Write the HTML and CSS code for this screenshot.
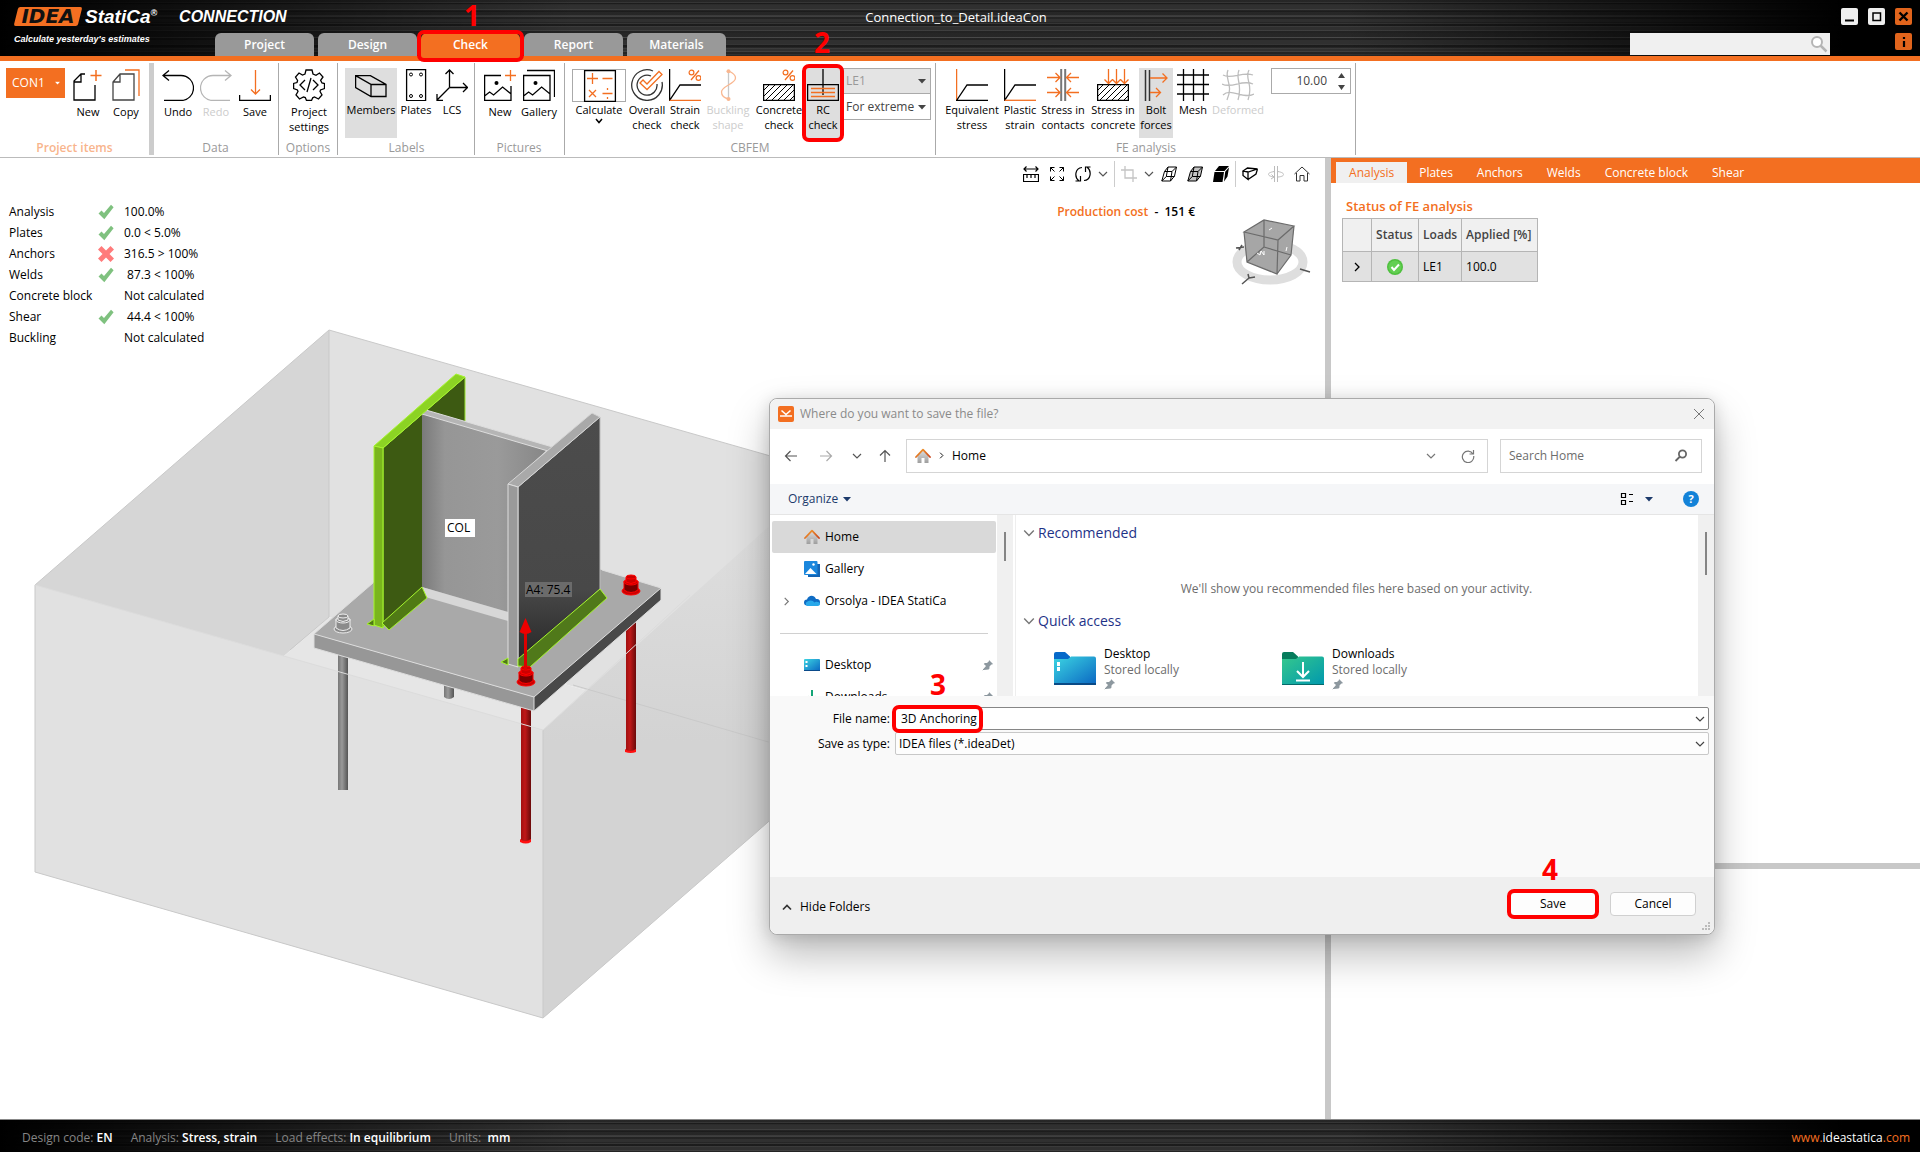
FILE: index.html
```html
<!DOCTYPE html>
<html lang="en">
<head>
<meta charset="utf-8">
<title>Connection_to_Detail.ideaCon</title>
<link rel="stylesheet" href="styles.css">
</head>
<body>
<svg class="defs" aria-hidden="true">
  <defs>
    <linearGradient id="roof" x1="0" y1="0" x2="1" y2="1"><stop offset="0" stop-color="#f7a531"/><stop offset="1" stop-color="#c9421a"/></linearGradient>
    <linearGradient id="wall" x1="0" y1="0" x2="0" y2="1"><stop offset="0" stop-color="#dcdcdc"/><stop offset="1" stop-color="#9e9e9e"/></linearGradient>
    <linearGradient id="blue" x1="0" y1="0" x2="1" y2="1"><stop offset="0" stop-color="#3cd5e2"/><stop offset="1" stop-color="#0a66c2"/></linearGradient>
    <linearGradient id="green" x1="0" y1="0" x2="1" y2="1"><stop offset="0" stop-color="#35c88d"/><stop offset="1" stop-color="#0098ae"/></linearGradient>
  </defs>
  <symbol id="i-home" viewBox="0 0 16 16"><path d="M2.500 7.500v7.500h4v-5h3v5h4V7.500L8 2.500z" fill="url(#wall)"/><path d="M1 9 8 1.600 15 9" fill="none" stroke="url(#roof)" stroke-width="1.800" stroke-linecap="round" stroke-linejoin="round"/></symbol>
  <symbol id="i-pin" viewBox="0 0 12 12"><path d="M7 1l4 4-1 .6-.6-.1-1.900 1.900-.1 2.300-.9.9L1.500 10.900 1 10.400 4 7 1.800 5l1-.9 2.200-.1L6.900 2.200z" fill="#8d989f"/><path d="M4 8 .8 11.200" stroke="#8d989f"/></symbol>
  <symbol id="i-down" viewBox="0 0 10 10"><path d="M1 3l4 4 4-4" fill="none" stroke="currentColor" stroke-width="1.200"/></symbol>
  <symbol id="i-right" viewBox="0 0 10 10"><path d="M3 1l4 4-4 4" fill="none" stroke="currentColor" stroke-width="1.300"/></symbol>
  <symbol id="i-caret" viewBox="0 0 8 6"><path d="M0 1h8L4 5.500z" fill="currentColor"/></symbol>
  <symbol id="i-tick" viewBox="0 0 16 16"><path d="M.5 9.500 3.500 6.500 6 9 13 .8l2.600 2.400L6.300 15.200z" fill="#7fc17f"/></symbol>
  <symbol id="i-cross" viewBox="0 0 16 16"><path d="M3.500 0 8 4.500 12.500 0 16 3.500 11.500 8l4.500 4.500-3.500 3.500L8 11.500 3.500 16 0 12.500 4.500 8 0 3.500z" fill="#ff7b7b"/></symbol>
  <symbol id="i-cube" viewBox="0 0 16 16"><path d="M3.500 5.500 7 1h8.500l-2 9-4 5H.8z"/><path d="M3.500 5.500H11l4.500-4.500M11 5.500 9.500 15M7 1 5.300 10.500H13.500M5.300 10.500.8 15" fill="none"/></symbol>
</svg>

<header class="top">
  <div class="top-row">
    <div class="brand">
      <span class="logo"><span class="logo-idea">IDEA</span></span><span class="logo-name">StatiCa<sup>®</sup></span><span class="logo-app">CONNECTION</span>
    </div>
    <h1 class="doc-title">Connection_to_Detail.ideaCon</h1>
    <div class="win-buttons">
      <button class="win" aria-label="Minimize"><svg width="17" height="17"><path d="M4 12.500h9" stroke="#000" stroke-width="2"/></svg></button>
      <button class="win" aria-label="Maximize"><svg width="17" height="17"><path d="M5 5h7.500v7.500H5z" fill="none" stroke="#000" stroke-width="1.500"/></svg></button>
      <button class="win hot" aria-label="Close"><svg width="17" height="17"><path d="M4.500 4.500l8 8M12.500 4.500l-8 8" stroke="#000" stroke-width="2.400"/></svg></button>
    </div>
  </div>
  <div class="tab-row">
    <div class="tagline">Calculate yesterday's estimates</div>
    <nav class="tabs">
      <a class="tab" href="#project">Project</a>
      <a class="tab" href="#design">Design</a>
      <a class="tab active marked" href="#check">Check<span class="ring ring-tab"></span><span class="num num-tab">1</span></a>
      <a class="tab" href="#report">Report</a>
      <a class="tab" href="#materials">Materials</a>
    </nav>
    <div class="find">
      <input type="text" aria-label="Search">
      <svg width="18" height="18" viewBox="0 0 18 18"><circle cx="7" cy="7" r="5" fill="#fff" stroke="#b5b5b5" stroke-width="2"/><path d="M10.500 10.500l6 6" stroke="#b5b5b5" stroke-width="2.500"/></svg>
    </div>
    <button class="win hot" aria-label="Information"><svg width="17" height="17"><path d="M9 4v2M9 8v6" stroke="#000" stroke-width="2.200"/></svg></button>
  </div>
</header>

<section class="ribbon">
  <div class="group g-items">
    <div class="tools">
      <button class="con">CON1 <svg width="5" height="4" viewBox="0 0 8 6"><use href="#i-caret"/></svg></button>
      <button class="tool low w46"><svg width="32" height="32"><path d="M23 16v15H2V12l7-7h4M9 5v8H2" fill="none" stroke="#000" stroke-width="1.300"/><path d="M24 1v11M18.500 6.500h11" stroke="#f36f21" stroke-width="1.500"/></svg>New</button>
      <button class="tool low w30"><svg width="32" height="32"><path d="M3 31V13l7-8h14v26zM10 5v8H3" fill="none" stroke="#444" stroke-width="1.300"/><path d="M15 1h14v26" fill="none" stroke="#f36f21" stroke-width="1.300"/></svg>Copy</button>
    </div>
    <div class="group-name hot-name">Project items</div>
  </div>
  <div class="group g-data">
    <div class="tools">
      <button class="tool low w38"><svg width="32" height="32"><path d="M1 6.500h18a12 12 0 0 1 0 25H2M7 1.500l-6 5 6 5" fill="none" stroke="#000" stroke-width="1.300"/></svg>Undo</button>
      <button class="tool low w38 off"><svg width="32" height="32"><path d="M31 6.500H13a12 12 0 0 0 0 25h17M25 1.500l6 5-6 5" fill="none" stroke="#b5b5b5" stroke-width="1.300"/></svg>Redo</button>
      <button class="tool low w40"><svg width="32" height="32"><path d="M.6 26v5.400h30.800V26" fill="none" stroke="#000" stroke-width="1.300"/><path d="M16.500 1v24M12 20.500l4.500 4.500 4.500-4.500" fill="none" stroke="#f36f21" stroke-width="1.300"/></svg>Save</button>
    </div>
    <div class="group-name">Data</div>
  </div>
  <div class="group g-options">
    <div class="tools">
      <button class="tool low w60"><svg width="32" height="32" viewBox="0 0 32 32"><path d="M13 1h6l1 4 3 1.300L26.500 4 30 8l-2.400 3.300L29 14l2.500.6v5L27.500 21 27 22.500 29 26l-3.500 4-4-2-1.800.8L18.500 31.500h-5L12.300 28.500 10.500 28l-4 2L3 26l2-3.500-.6-1.500L.6 19.500v-5L4 13.500l.6-2L2.500 8 6 4l3.500 2L12 5z" fill="none" stroke="#000" stroke-width="1.300"/><path d="M12 11l-5 5 5 5M20 11l5 5-5 5M18 9l-4 14" fill="none" stroke="#000" stroke-width="1.300"/></svg>Project<br>settings</button>
    </div>
    <div class="group-name">Options</div>
  </div>
  <div class="group g-labels">
    <div class="tools">
      <button class="tool w52 on"><svg width="32" height="32"><path d="M.6 6.600h14.800L31 15.500v12H16L.6 18.500zM.6 6.600 16 15.500v12M16 15.500h15" fill="none" stroke="#000" stroke-width="1.300"/></svg>Members</button>
      <button class="tool w38"><svg width="32" height="32"><path d="M6.600.6h19v31h-19z" fill="none" stroke="#000" stroke-width="1.300"/><g fill="#fff" stroke="#000"><circle cx="11" cy="5.500" r="1.500"/><circle cx="21" cy="5.500" r="1.500"/><circle cx="11" cy="27" r="1.500"/><circle cx="21" cy="27" r="1.500"/></g></svg>Plates</button>
      <button class="tool w34"><svg width="32" height="32"><path d="M13.500 18V1M9.500 5l4-4 4 4M13.500 18.500h18M27 14l4.500 4.500L27 23M13.500 18.500.8 31.200M1 25v6.500h6" fill="none" stroke="#000" stroke-width="1.300"/></svg>LCS</button>
    </div>
    <div class="group-name">Labels</div>
  </div>
  <div class="group g-pictures">
    <div class="tools">
      <button class="tool low w40"><svg width="32" height="32"><path d="M17 6.500H.6v25H27V17M.6 27l5-4 4 3 9-8 8.500 7" fill="none" stroke="#000" stroke-width="1.300"/><circle cx="12.500" cy="14" r="2"/><path d="M26.500 1v11M21 6.500h11" stroke="#f36f21" stroke-width="1.300"/></svg>New</button>
      <button class="tool low w38"><svg width="32" height="32"><path d="M.6 6.500H27v25H.6zM.6 27l5-4 4 3 9-8 8.500 7M4 1.500h27.500V28" fill="none" stroke="#000" stroke-width="1.300"/><circle cx="12.500" cy="14" r="2"/></svg>Gallery</button>
    </div>
    <div class="group-name">Pictures</div>
  </div>
  <div class="group g-cbfem">
    <div class="tools">
      <button class="tool calc w56"><svg width="32" height="32"><path d="M.6.6h30.800v30.800H.6z" fill="none" stroke="#000" stroke-width="1.300"/><path d="M3 8.500h11M8.500 3v11M18.500 8.500h10M5 20l7 7M12 20l-7 7M18.500 23.500h10M23.500 18v2M23.500 27v2" stroke="#f36f21" stroke-width="1.300"/></svg>Calculate<svg class="more" width="8" height="8"><path d="M1 2l3 3.500L7 2" fill="none" stroke="#000" stroke-width="1.500"/></svg></button>
      <button class="tool w40"><svg width="32" height="32"><path d="M22 2a15.300 15.300 0 1 0 9 11M20 7a10 10 0 1 0 6 8" fill="none" stroke="#333" stroke-width="1.300"/><path d="M9 14l3-3 4 4L28 2.500l3 3L16 20.500z" fill="#fff" stroke="#f36f21" stroke-width="1.300"/></svg>Overall<br>check</button>
      <button class="tool w36"><svg width="32" height="32"><path d="M.6 0v31.400L11 16h21" fill="none" stroke="#000" stroke-width="1.300"/><path d="M.6 31.300H32M30 1.500 22 11" stroke="#f36f21" stroke-width="1.300"/><g fill="none" stroke="#f36f21" stroke-width="1.200"><circle cx="22.500" cy="3.500" r="2.400"/><circle cx="29.500" cy="9" r="2.400"/></g></svg>Strain<br>check</button>
      <button class="tool w50 off"><svg width="32" height="32"><path d="M16.500 2v28" stroke="#c8c8c8" stroke-width="1.300"/><path d="M16.500 2c5 2 7 5 7 7 0 6-14 8-14 14 0 4 3 6 7 7" fill="none" stroke="#f9b790" stroke-width="1.300"/><circle cx="16.500" cy="2.200" r="2" fill="#f9b790"/><circle cx="16.500" cy="30" r="2" fill="#f9b790"/></svg>Buckling<br>shape</button>
      <button class="tool w52"><svg width="32" height="32"><path d="M.6 15.600h30.800v15.800H.6z" fill="none" stroke="#000" stroke-width="1.300"/><path d="M1 21l5-5M1 27l11-11M3 31l15-15M9 31l15-15M15 31l15-15M21 31l10-10M27 31l4-4" stroke="#000"/><path d="M30 1.500 22 11" stroke="#f36f21" stroke-width="1.300"/><g fill="none" stroke="#f36f21" stroke-width="1.200"><circle cx="22.500" cy="3.500" r="2.400"/><circle cx="29.500" cy="9" r="2.400"/></g></svg>Concrete<br>check</button>
      <button class="tool w36 on marked"><svg width="32" height="32"><path d="M.6 15.600h30.800v15.800H.6zM16 0v26" fill="none" stroke="#000" stroke-width="1.300"/><path d="M4 19.500h24M4 23.500h24M4 27.500h24" stroke="#f36f21" stroke-width="1.300"/></svg>RC<br>check<span class="ring ring-rc"></span><span class="num num-rc">2</span></button>
      <div class="combos">
        <span class="combo"><select aria-label="Load effect" disabled><option>LE1</option></select><svg width="8" height="6"><use href="#i-caret"/></svg></span>
        <span class="combo"><select aria-label="Result filter"><option>For extreme</option></select><svg width="8" height="6"><use href="#i-caret"/></svg></span>
      </div>
    </div>
    <div class="group-name">CBFEM</div>
  </div>
  <div class="group g-fe">
    <div class="tools">
      <button class="tool w58"><svg width="32" height="32"><path d="M.6 0v31" stroke="#f36f21" stroke-width="1.300"/><path d="M32 31.400H.6L11 16h21" fill="none" stroke="#000" stroke-width="1.300"/></svg>Equivalent<br>stress</button>
      <button class="tool w38"><svg width="32" height="32"><path d="M.6 0v31.400L11 16h21" fill="none" stroke="#000" stroke-width="1.300"/><path d="M.6 31.300H32" stroke="#f36f21" stroke-width="1.300"/></svg>Plastic<br>strain</button>
      <button class="tool w48"><svg width="32" height="32"><path d="M14.200 0v32M18.200 0v32" stroke="#777" stroke-width="2"/><path d="M0 8.500h13M8.500 4l4.500 4.500L8.500 13M0 23.500h13M8.500 19l4.500 4.500L8.500 28M32 8.500H19.500M24 4l-4.500 4.500L24 13M32 23.500H19.500M24 19l-4.500 4.500L24 28" fill="none" stroke="#f36f21" stroke-width="1.300"/></svg>Stress in<br>contacts</button>
      <button class="tool w52"><svg width="32" height="32"><path d="M.6 15.600h30.800v15.800H.6z" fill="none" stroke="#000" stroke-width="1.300"/><path d="M1 21l5-5M1 27l11-11M3 31l15-15M9 31l15-15M15 31l15-15M21 31l10-10M27 31l4-4" stroke="#000"/><path d="M11.500 0v14M7.500 10.500l4 4 4-4M19.500 0v14M15.500 10.500l4 4 4-4M27.500 0v14M23.500 10.500l4 4 4-4" fill="none" stroke="#f36f21" stroke-width="1.300"/></svg>Stress in<br>concrete</button>
      <button class="tool w34 on"><svg width="32" height="32"><path d="M5.500 1v31M9.500 1v31" stroke="#333" stroke-width="1.500"/><path d="M10 9h17M22.500 4.500 27 9l-4.500 4.500M10 23.500h10M16 19l4.500 4.500L16 28" fill="none" stroke="#f36f21" stroke-width="1.300"/></svg>Bolt<br>forces</button>
      <button class="tool w40"><svg width="32" height="32"><path d="M6.500 0v32M16.500 0v32M26.500 0v32M0 6h32M0 15.500h32M0 25h32" stroke="#000" stroke-width="1.300"/></svg>Mesh</button>
      <button class="tool w50 off"><svg width="32" height="32"><path d="M6 1c-4 9 6 14-1 30M17 1c-4 9 4 14-1 30M27 1c-5 9 5 14-1 30M1 6c8 5 20-4 30 0M0 15c10 5 20-5 31 0M1 26c8-8 20 5 31-1" fill="none" stroke="#bdbdbd" stroke-width="1.300"/></svg>Deformed</button>
      <span class="spin"><input type="text" value="10.00" aria-label="Deformation scale"><svg width="7" height="17"><path d="M0 5h7L3.500 0zM0 12h7l-3.500 5z" fill="#444"/></svg></span>
    </div>
    <div class="group-name">FE analysis</div>
  </div>
</section>

<main class="work">
  <section class="view">
    <svg class="scene" viewBox="0 158 1325 961" preserveAspectRatio="xMinYMin slice" aria-label="Connection model">
      <defs>
        <linearGradient id="webg"><stop offset="0" stop-color="#7a7a7a"/><stop offset=".18" stop-color="#969696"/><stop offset=".6" stop-color="#9a9a9a"/><stop offset="1" stop-color="#868686"/></linearGradient>
        <linearGradient id="side" x1="0" y1="0" x2="0" y2="1"><stop offset="0" stop-color="#e1e1e1"/><stop offset=".5" stop-color="#d3d3d3"/></linearGradient>
        <linearGradient id="rodg"><stop offset="0" stop-color="#777"/><stop offset=".4" stop-color="#999"/><stop offset="1" stop-color="#555"/></linearGradient>
        <linearGradient id="rodr"><stop offset="0" stop-color="#a01010"/><stop offset=".4" stop-color="#c01818"/><stop offset="1" stop-color="#6a0a0a"/></linearGradient>
        <linearGradient id="dk" x1="0" y1="0" x2="0" y2="1"><stop offset="0" stop-color="#4c4c4c"/><stop offset=".7" stop-color="#484848"/><stop offset="1" stop-color="#262626"/></linearGradient>
      </defs>
      <path d="M329 330 837 475v287L329 617z" fill="#e1e1e1"/>
      <path d="M35 585 329 330v287L35 872z" fill="#d6d6d6"/>
      <path d="M329 617 837 762 543 1018 35 872z" fill="#e6e6e6"/>
      <path d="M35 585 543 730v288L35 872z" fill="#e1e1e1"/>
      <path d="M543 730 837 465v297L543 1018z" fill="url(#side)"/>
      <g fill="none" stroke="#c9c9c9"><path d="M35 585 329 330 837 475M329 330v287l-39 33M573 685l264 77M35 585v287l508 146V730M543 1018l294-256"/></g>
      <path d="M338 650h10v140h-10z" fill="url(#rodg)"/><path d="M444 680h10v17q-5 4-10 0z" fill="url(#rodg)"/>
      <path d="M626 620h10v131h-10z" fill="url(#rodr)"/><path d="M521 700h10v142h-10z" fill="url(#rodr)"/>
      <path d="M625 749q5 4 11 0v3q-5 2-11 0zM520 839q5 4 11 0v3q-5 3-11 0z" fill="#ff1010"/>
      <path d="M314 634 444 522 661 588 534 697z" fill="#a9a9a9"/>
      <path d="M314 634 534 697v14L314 648z" fill="#979797"/>
      <path d="M534 697 661 588v12L534 711z" fill="#494949"/>
      <path d="M314 634v14L534 711 661 600v-12L534 697z M534 697v14M314 634 373 583M602 570l59 18" fill="none" stroke="#dcdcdc"/>
      <path d="M35 585 543 730 690 595" fill="none" stroke="#dcdcdc"/>
      <path d="M383 448 465 377v170l-43 40-39 40z" fill="#3d5a12" stroke="#9be62e"/>
      <path d="M422 412 548 449 508 486v126l-86-25z" fill="url(#webg)"/>
      <path d="M466 423v-3l10 4 74 22-4 4-80-24z" fill="#e1e1e1"/>
      <path d="M418 412q3-4 8-2l130 38-8 3-126-37z" fill="#b5b5b5" stroke="#ddd"/>
      <path d="M422 587 508 612v9l-86-25z" fill="#d7d7d7"/>
      <path d="M374 446 456 374l9 3-82 71z" fill="#8cd324" stroke="#a6f52e"/>
      <path d="M374 446l9 2v180l-9-3z" fill="#7ab51d" stroke="#a6f52e"/>
      <path d="M422 587l5 11-38 32-7-7zM367 624l7-5v7z" fill="#507a15" stroke="#a6f52e"/>
      <path d="M518 487 600 417v172l-82 74z" fill="url(#dk)" stroke="#bbb"/>
      <path d="M508 484 592 413l8 4-82 70z" fill="#a9a9a9" stroke="#d5d5d5"/>
      <path d="M508 484l10 3v180l-10-3z" fill="#9a9a9a" stroke="#ddd"/>
      <path d="M600 589l7 9-77 69-12-1v-7zM501 662l7-4v7z" fill="#50791a" stroke="#a6f52e"/>
      <g fill="#8b8b8b" stroke="#eee"><ellipse cx="343" cy="629" rx="9" ry="4"/><path d="M336 619h14v9q-7 5-14 0z"/><ellipse cx="343" cy="620" rx="7" ry="3"/><path d="M338 616v4q5 3 10 0v-4z"/><ellipse cx="343" cy="616" rx="5" ry="2"/></g>
      <g fill="#c00" stroke="#f00"><ellipse cx="631" cy="591" rx="9" ry="4"/><path d="M624 581h14v9q-7 5-14 0z" fill="#700"/><ellipse cx="631" cy="582" rx="7" ry="3"/><path d="M626 577v5q5 3 10 0v-5z"/><ellipse cx="631" cy="577" rx="5" ry="2"/>
      <ellipse cx="526" cy="682" rx="9" ry="4"/><path d="M519 672h14v9q-7 5-14 0z" fill="#700"/><ellipse cx="526" cy="673" rx="7" ry="3"/><path d="M521 668v5q5 3 10 0v-5z"/><ellipse cx="526" cy="668" rx="5" ry="2"/></g>
      <path d="M525.500 632v38" stroke="#d00" stroke-width="3"/><path d="M525.500 618l-6 14q6 4 12 0z" fill="#e00"/>
      <path d="M445 519h30v18h-30z" fill="#fff"/><text class="tag" x="447" y="532">COL</text>
      <path d="M525 582h47v15h-47z" fill="#6b6b6b"/><text class="tag" x="526" y="594">A4: 75.4</text>
    </svg>
    <div class="view-tools">
      <button aria-label="Measure"><svg width="16" height="16"><path d="M.5 8.500h15v7H.5zM4 9v3M8 9v3M12 9v3M1 3h14M3.500.5 1 3l2.500 2.500M12.500.5 15 3l-2.500 2.500" fill="none" stroke="#000" stroke-width="1.200"/></svg></button>
      <button aria-label="Zoom to fit"><svg width="16" height="16"><path d="M1.500 5.500v-4h4M1.500 1.500l4 4M10.500 1.500h4v4M14.500 1.500l-4 4M1.500 10.500v4h4M1.500 14.500l4-4M14.500 10.500v4h-4M14.500 14.500l-4-4" fill="none" stroke="#000"/></svg></button>
      <button aria-label="Rotate"><svg width="16" height="16"><path d="M4 15C-1 11 0 2 7 1.500M5.500 10v5H.5M12 1c5 4 4 13-3 13.500M10.500 6V1h5" fill="none" stroke="#000" stroke-width="1.200"/></svg></button>
      <button class="mini" aria-label="Rotate options"><svg width="10" height="10"><use href="#i-down"/></svg></button>
      <i class="bar"></i>
      <button aria-label="Section"><svg width="16" height="16"><path d="M4 0v12h12M0 4h12v12" fill="none" stroke="#c4c4c4" stroke-width="1.300"/></svg></button>
      <button class="mini" aria-label="Section options"><svg width="10" height="10"><use href="#i-down"/></svg></button>
      <button aria-label="Wireframe"><svg width="16" height="16" fill="none" stroke="#000"><use href="#i-cube"/></svg></button>
      <button aria-label="Transparent"><svg width="16" height="16" fill="#c4c4c4" stroke="#000"><use href="#i-cube"/></svg></button>
      <button aria-label="Solid"><svg width="16" height="16"><path d="M1.500 6h9.500L9.500 16H0zM2 5 6 0h10l-4.500 5zM11 15.500 12.200 5.800 16 1.500l-1.500 9z"/></svg></button>
      <i class="bar"></i>
      <button aria-label="Perspective"><svg width="16" height="16"><path d="M1 5 5.500 2 15.500 3 6 6zM1 5v4.500l5 4V6M6 13.500 14 8l1.500-5" fill="none" stroke="#000" stroke-width="1.300"/></svg></button>
      <button aria-label="Mirror"><svg width="16" height="16"><path d="M6.500 0v16M9.500 0v16M6 5.500C-2 7-1 10 6 11M3.500 8.500 6 11l-3 2M10 5.500c8 1.500 7 5 0 5.500" fill="none" stroke="#bbb"/></svg></button>
      <button aria-label="Home view"><svg width="16" height="16"><path d="M.5 8 8 1l7.500 7M2.500 7v8h3.500V9.500h4V15h3.500V7" fill="none" stroke="#333"/></svg></button>
    </div>
    <div class="hud">
      <table class="checks">
        <tr><th>Analysis</th><td><svg width="16" height="16"><use href="#i-tick"/></svg></td><td>100.0%</td></tr>
        <tr><th>Plates</th><td><svg width="16" height="16"><use href="#i-tick"/></svg></td><td>0.0 &lt; 5.0%</td></tr>
        <tr><th>Anchors</th><td><svg width="16" height="16"><use href="#i-cross"/></svg></td><td>316.5 &gt; 100%</td></tr>
        <tr><th>Welds</th><td><svg width="16" height="16"><use href="#i-tick"/></svg></td><td>&nbsp;87.3 &lt; 100%</td></tr>
        <tr><th>Concrete block</th><td></td><td>Not calculated</td></tr>
        <tr><th>Shear</th><td><svg width="16" height="16"><use href="#i-tick"/></svg></td><td>&nbsp;44.4 &lt; 100%</td></tr>
        <tr><th>Buckling</th><td></td><td>Not calculated</td></tr>
      </table>
      <p class="cost"><b>Production cost</b>&nbsp; - &nbsp;151 €</p>
      <svg class="nav-cube" width="80" height="68" viewBox="1231 218 80 68" aria-label="View orientation">
        <ellipse cx="1270" cy="262" rx="33" ry="18" fill="none" stroke="#dedede" stroke-width="9"/>
        <path d="M1244 232 1264 220 1294 226 1291 255 1277 274 1247 262z" fill="#a6a6a6"/>
        <path d="M1244 232l34 8 16-14-30-6zl3 30 30 12 1-34M1277 274l14-19 3-29M1264 220v27l-17 15M1264 247l27 8" fill="none" stroke="#6b6b6b" stroke-width="1.200"/>
        <path d="M1269 230l3-2M1286 251l1-4M1257 253l3 2 1-4 3 4v-4" stroke="#fff" fill="none"/>
        <path d="M1236 248l8-1M1239 250l3-5M1300 269l10 3M1242 284l7-6-1-4M1249 278l6-1" stroke="#555" stroke-width="1.500" fill="none"/>
      </svg>
    </div>
  </section>

  <aside class="results">
    <nav class="result-tabs">
      <a class="active" href="#analysis">Analysis</a><a href="#plates">Plates</a><a href="#anchors">Anchors</a><a href="#welds">Welds</a><a href="#block">Concrete block</a><a href="#shear">Shear</a>
    </nav>
    <div class="result-body">
      <h2>Status of FE analysis</h2>
      <table class="grid">
        <thead><tr><th></th><th>Status</th><th>Loads</th><th>Applied [%]</th></tr></thead>
        <tbody><tr><td><svg width="10" height="10"><use href="#i-right"/></svg></td><td><svg width="16" height="16"><circle cx="8" cy="8" r="8" fill="#4fc03f"/><circle cx="8" cy="8" r="6.500" fill="#63cf52"/><path d="M4.500 8l2.500 3 5-5.500" fill="none" stroke="#fff" stroke-width="2"/></svg></td><td>LE1</td><td>100.0</td></tr></tbody>
      </table>
    </div>
    <div class="result-detail"></div>
  </aside>
</main>

<footer class="status">
  <span>Design code: <b>EN</b></span><span>Analysis: <b>Stress, strain</b></span><span>Load effects: <b>In equilibrium</b></span><span>Units: <b>&nbsp;mm</b></span>
  <a href="#site">www.<em>ideastatica</em>.com</a>
</footer>

<div class="dialog" role="dialog" aria-labelledby="dlg-title">
  <div class="dlg-title">
    <svg width="16" height="16"><rect width="16" height="16" rx="2" fill="#f36f21"/><path d="M2 10h12M3.500 4.500 8 8.500l4.500-4" fill="none" stroke="#fff" stroke-width="1.600"/></svg>
    <span id="dlg-title">Where do you want to save the file?</span>
    <button class="plain" aria-label="Close"><svg width="12" height="12"><path d="M1 1l10 10M11 1 1 11" stroke="#777"/></svg></button>
  </div>
  <div class="dlg-nav">
    <button class="plain" aria-label="Back"><svg width="14" height="14"><path d="M13 7H1.500M6.500 2l-5 5 5 5" fill="none" stroke="#555" stroke-width="1.200"/></svg></button>
    <button class="plain" aria-label="Forward"><svg width="14" height="14"><path d="M1 7h11.500M7.500 2l5 5-5 5" fill="none" stroke="#aaa" stroke-width="1.200"/></svg></button>
    <button class="plain" aria-label="Recent"><svg width="10" height="10"><use href="#i-down"/></svg></button>
    <button class="plain" aria-label="Up"><svg width="14" height="14"><path d="M7 13V1.500M2 6.500l5-5 5 5" fill="none" stroke="#555" stroke-width="1.200"/></svg></button>
    <div class="address">
      <svg width="16" height="16"><use href="#i-home"/></svg>
      <svg width="7" height="7" viewBox="0 0 10 10"><use href="#i-right"/></svg>
      <a href="#home">Home</a>
      <button class="plain" aria-label="Locations"><svg width="10" height="10"><use href="#i-down"/></svg></button>
      <button class="plain" aria-label="Refresh"><svg width="14" height="14"><path d="M12 5A5.700 5.700 0 1 0 12.700 7M12.500 1v4h-4" fill="none" stroke="#777" stroke-width="1.200"/></svg></button>
    </div>
    <div class="dlg-search"><input type="text" placeholder="Search Home" aria-label="Search Home"><svg width="14" height="14"><circle cx="8.500" cy="5" r="3.600" fill="none" stroke="#666" stroke-width="1.800"/><path d="M6 7.500 1.500 12" stroke="#666" stroke-width="1.800"/></svg></div>
  </div>
  <div class="dlg-bar">
    <button class="plain organize">Organize <svg width="8" height="6"><use href="#i-caret"/></svg></button>
    <button class="plain" aria-label="View"><svg width="14" height="14"><path d="M1.500 1.500h4v4h-4zM1.500 8.500h4v4h-4zM9 2.500h4M9 9.500h4" fill="none" stroke="#000" stroke-width="1.200"/></svg></button>
    <button class="plain" aria-label="View options"><svg width="8" height="6"><use href="#i-caret"/></svg></button>
    <button class="plain help" aria-label="Help">?</button>
  </div>
  <div class="dlg-body">
    <nav class="places">
      <a class="active" href="#home"><svg width="16" height="16"><use href="#i-home"/></svg>Home</a>
      <a href="#gallery"><svg width="16" height="16"><path d="M4 3h12v13H4z" fill="#1565b5"/><rect width="13.500" height="14" rx="1" fill="#1b87dd"/><path d="M1 13l5.500-6 6 6z" fill="#fff"/><circle cx="9.500" cy="3.500" r="1.200" fill="#fff"/></svg>Gallery</a>
      <a href="#cloud"><svg class="expand" width="9" height="9" viewBox="0 0 10 10"><use href="#i-right"/></svg><svg width="16" height="16"><path d="M3 12.500a3 3 0 0 1 0-6C4.500 2 10 1.500 12 6c3.500 0 4 1.500 4 3.500s-1 3-3 3z" fill="#0f6cc4"/><path d="M3.500 13c-2-.5-2.500-3.500 0-4.500C7 6.500 9 8 10.500 9.500c1-1.500 5.500-1 5.500 1.500 0 1.300-1 2-2.500 2z" fill="#28a8ea"/></svg>Orsolya - IDEA StatiCa</a>
      <hr>
      <a href="#desktop"><svg width="16" height="16"><rect y="2" width="16" height="12" rx="1" fill="url(#blue)"/><path d="M2.500 4v2M2.500 8v2" stroke="#fff" stroke-width="2"/><path d="M0 13.500h16" stroke="#0a4a8a"/></svg>Desktop<svg class="pin" width="12" height="12"><use href="#i-pin"/></svg></a>
      <a href="#downloads"><svg width="16" height="16"><path d="M8 1v10M4 7.500l4 4 4-4M2 14.500h12" fill="none" stroke="#14a577" stroke-width="2"/></svg>Downloads<svg class="pin" width="12" height="12"><use href="#i-pin"/></svg></a>
    </nav>
    <div class="scroll"><span class="thumb"></span></div>
    <div class="files">
      <h3><svg width="12" height="12" viewBox="0 0 10 10"><use href="#i-down"/></svg>Recommended</h3>
      <p class="empty">We'll show you recommended files here based on your activity.</p>
      <h3><svg width="12" height="12" viewBox="0 0 10 10"><use href="#i-down"/></svg>Quick access</h3>
      <div class="folders">
        <a class="folder" href="#desktop"><svg width="42" height="34"><path d="M0 2q0-2 2-2h9l5 4.500V12H0z" fill="#0669c9"/><path d="M0 7h14l3-2.500h23q2 0 2 2V33H0z" fill="url(#blue)"/><path d="M0 31h42v2H0z" fill="#0a4a86"/><path d="M4.500 10v4M4.500 15v4" stroke="#fff" stroke-width="3"/></svg><span>Desktop<small>Stored locally</small><svg width="12" height="12"><use href="#i-pin"/></svg></span></a>
        <a class="folder" href="#downloads"><svg width="42" height="34"><path d="M0 2q0-2 2-2h9l5 4.500V12H0z" fill="#067c5c"/><path d="M0 7h14l3-2.500h23q2 0 2 2V33H0z" fill="url(#green)"/><path d="M0 32.500h42" stroke="#056a6a"/><path d="M21 10v15M15 19l6 6 6-6M14 28.500h14" fill="none" stroke="#fff" stroke-width="2"/></svg><span>Downloads<small>Stored locally</small><svg width="12" height="12"><use href="#i-pin"/></svg></span></a>
      </div>
    </div>
    <div class="scroll"><span class="thumb tall"></span></div>
  </div>
  <form class="dlg-form">
    <label for="fname">File name:</label>
    <span class="field strong marked"><input id="fname" type="text" value="3D Anchoring"><svg width="10" height="10"><use href="#i-down"/></svg><span class="ring ring-name"></span><span class="num num-name">3</span></span>
    <label for="ftype">Save as type:</label>
    <span class="field"><select id="ftype"><option>IDEA files (*.ideaDet)</option></select><svg width="10" height="10"><use href="#i-down"/></svg></span>
  </form>
  <div class="dlg-foot">
    <button class="plain hide"><svg width="10" height="10"><path d="M1 7.500l4-4 4 4" fill="none" stroke="#333" stroke-width="1.700"/></svg>Hide Folders</button>
    <button class="btn marked">Save<span class="ring ring-save"></span><span class="num num-save">4</span></button>
    <button class="btn">Cancel</button>
    <svg class="grip" width="9" height="9"><path d="M6 0h2v2H6zM6 3h2v2H6zM3 3h2v2H3zM6 6h2v2H6zM3 6h2v2H3zM0 6h2v2H0z" fill="#bbb"/></svg>
  </div>
</div>
</body>
</html>
```
FILE: styles.css
```css
* { box-sizing: border-box; }
body {
  margin: 0;
  min-height: 100vh;
  display: flex;
  flex-direction: column;
  position: relative;
  background: #fff;
  color: #000;
  font: 12px/16px "Open Sans", "Noto Sans", sans-serif;
}
button, input, select { font: inherit; color: inherit; margin: 0; }
button { padding: 0; border: 0; background: none; }
a { color: inherit; text-decoration: none; }
b { font-weight: 600; }
svg { display: block; flex: none; }
.defs { position: absolute; width: 0; height: 0; }

/* title bar */
.top, .status {
  background:
    linear-gradient(90deg, #000, transparent 30% 70%, #000 96%),
    repeating-linear-gradient(#fff0 0 2px, #ffffff12 2px 3px, #0004 3px 5px, #fff0 5px 7px),
    repeating-linear-gradient(#0003 0 4px, #ffffff0d 4px 5px, #fff0 5px 11px),
    #303030;
}
.top { border-bottom: 5px solid #f36f21; color: #fff; }
.top-row { display: grid; grid-template-columns: 1fr auto 1fr; height: 33px; padding-right: 8px; }
.brand { display: flex; align-items: center; padding-left: 16px; }
.logo { transform: skewX(-14deg); width: 64px; height: 19px; background: #f36f21; border-radius: 2px; text-align: center; }
.logo-idea { display: block; transform: skewX(14deg); color: #111; font: italic bold 20px/19px "DejaVu Sans", sans-serif; }
.logo-name { margin-left: 5px; font: italic bold 19px/20px "Liberation Sans", sans-serif; }
.logo-name sup { font-size: 9px; line-height: 0; }
.logo-app { margin-left: 22px; font: italic bold 16px/20px "Liberation Sans", sans-serif; }
.doc-title { margin: 0; align-self: center; font-size: 13px; font-weight: normal; line-height: 18px; }
.win-buttons { display: flex; justify-content: flex-end; gap: 10px; padding-top: 8px; }
.win { width: 17px; height: 17px; border-radius: 2px; background: #eee; }
.win.hot { background: #e0641c; }
.tab-row { display: flex; height: 23px; padding-right: 8px; }
.tagline { width: 215px; padding-left: 14px; font: italic bold 9px/12px "Liberation Sans", sans-serif; }
.tabs { display: flex; gap: 4px; flex: 1; }
.tab { width: 99px; border-radius: 6px 6px 0 0; background: #999; font-weight: 600; line-height: 23px; text-align: center; }
.tab.active { background: #f36f21; }
.find { display: flex; align-items: center; width: 200px; height: 22px; margin-right: 65px; padding-right: 2px; background: #f0f0f0; }
.find input { flex: 1; min-width: 0; border: 0; background: none; color: #222; }

/* red call-outs */
.marked { position: relative; }
.ring { position: absolute; z-index: 2; border: 4px solid #f00; border-radius: 7px; pointer-events: none; }
.num { position: absolute; z-index: 2; color: #f00; font-size: 28px; font-weight: bold; line-height: 28px; }
.ring-tab { inset: -3px -4px -6px; }
.num-tab { left: 43px; top: -32px; }
.ring-rc { inset: -4px -3px -4px; }
.num-rc { left: 9px; top: -40px; }
.ring-name { left: -4px; top: -3px; width: 91px; height: 28px; }
.num-name { left: 34px; top: -38px; }
.ring-save { inset: -4px; }
.num-save { left: 31px; top: -38px; }

/* ribbon */
.ribbon { display: flex; padding: 2px 0; border-bottom: 1px solid #bbb; }
.group { display: flex; flex-direction: column; justify-content: space-between; height: 92px; border-right: 1px solid #aaa; }
.tools { display: flex; padding-top: 5px; }
.group-name { padding-right: 6px; color: #999; text-align: center; line-height: 14px; }
.hot-name { color: #f8b48c; font-weight: 600; }
.g-items { width: 154px; padding-left: 6px; border-right: 5px solid #ccc; }
.g-data { width: 125px; padding-left: 5px; }
.g-options { width: 59px; }
.g-options .group-name { padding: 0; }
.g-labels { width: 137px; padding-left: 7px; }
.g-pictures { width: 90px; padding-left: 5px; }
.g-cbfem { width: 371px; padding-left: 6px; }
.g-fe { width: 420px; padding-left: 7px; }
.con { display: flex; align-items: center; justify-content: space-between; width: 59px; height: 30px; padding: 0 5px 0 6px; background: #f36f21; color: #fff; }
.tool { display: flex; flex-direction: column; align-items: center; height: 70px; padding-top: 1px; font-size: 11px; line-height: 15px; white-space: nowrap; }
.tool > svg:first-child { margin-bottom: 1px; }
.tool.low > svg:first-child { margin-bottom: 3px; }
.tool.on { background: #dedede; }
.tool.off { color: #ccc; }
.tool.calc > svg:first-child { width: 54px; height: 33px; margin-bottom: 0; padding: 0 11px; border: 1px solid #aaa; overflow: visible; }
.w30 { width: 30px; } .w34 { width: 34px; } .w36 { width: 36px; } .w38 { width: 38px; }
.w40 { width: 40px; } .w46 { width: 46px; } .w48 { width: 48px; } .w50 { width: 50px; }
.w52 { width: 52px; } .w56 { width: 56px; } .w58 { width: 58px; } .w60 { width: 60px; }
.tool, .con { flex: none; }
.combos { flex: none; width: 88px; margin-left: 2px; }
.combo { display: flex; align-items: center; position: relative; height: 26px; border: 1px solid #aaa; color: #444; }
.combo + .combo { border-top: 0; }
.combo select { appearance: none; width: 100%; height: 100%; padding: 0 0 0 2px; border: 0; background: #fff; }
.combo select:disabled { background: #e4e4e4; color: #999; opacity: 1; }
.combo svg { position: absolute; right: 4px; }
.spin { display: flex; align-items: center; flex: none; width: 80px; height: 26px; margin-left: 8px; padding-right: 5px; border: 1px solid #aaa; color: #444; }
.spin input { flex: 1; min-width: 0; padding: 0 11px 0 0; border: 0; text-align: right; }

/* workspace */
.work { display: flex; flex: 1; }
.view { position: relative; flex: 9; min-width: 0; overflow: hidden; }
.scene { position: absolute; left: 0; top: 0; width: 1325px; }
.tag { font-size: 12px; }
.view-tools { display: flex; align-items: center; justify-content: flex-end; height: 32px; padding-right: 10px; position: relative; }
.view-tools button { display: grid; place-items: center; width: 26px; }
.view-tools .mini { width: 14px; color: #555; }
.bar { width: 1px; height: 26px; margin: 0 1px; background: #ccc; }
.mini + .bar { margin-left: 4px; }
.hud { position: relative; display: flex; padding: 11px 14px 0 9px; }
.checks { border-collapse: collapse; margin-right: auto; }
.checks th, .checks td { height: 21px; padding: 0; font-weight: normal; text-align: left; }
.checks th { width: 89px; }
.checks td:nth-child(2) { width: 26px; }
.cost { margin: 3px 36px 0 0; font-weight: 600; }
.cost b { color: #f36f21; }
.nav-cube { margin-top: 17px; }

.results { display: flex; flex-direction: column; flex: 4; max-width: 595px; border-left: 6px solid #c8c8c8; }
.result-tabs { display: flex; height: 25px; padding: 4px 0 0 5px; background: #f36f21; color: #fff; }
.result-tabs a { padding: 0 12px; line-height: 21px; }
.result-tabs .active { padding: 0 13px; background: #f0f0f0; color: #f36f21; }
.result-body { flex: 1; padding: 14px 11px; }
.result-detail { height: 256px; border-top: 6px solid #c8c8c8; }
h2 { margin: 0 0 3px 4px; color: #f36f21; font-size: 13px; font-weight: 600; line-height: 18px; }
.grid { table-layout: fixed; width: 196px; border-collapse: collapse; border: 1px solid #808080; }
.grid th, .grid td { height: 30px; padding: 0 4px; border: 1px solid #b5b5b5; text-align: left; background: #e1e1e1; white-space: nowrap; }
.grid th { height: 33px; background: #f0f0f0; color: #444; font-weight: 600; }
.grid th:first-child { width: 29px; }
.grid th:nth-child(2) { width: 47px; }
.grid th:nth-child(3) { width: 43px; }
.grid td:nth-child(-n+2) svg { margin: 0 auto; }

.status { display: flex; gap: 18px; align-items: center; height: 33px; padding: 4px 10px 0 22px; color: #858585; border-top: 1px solid #888; }
.status b { color: #fff; }
.status a { margin-left: auto; color: #f36f21; }
.status em { color: #fff; font-style: normal; }

/* save dialog */
.dialog {
  position: absolute; left: 769px; top: 398px; width: 946px; z-index: 5;
  border: 1px solid #aaa; border-radius: 8px; background: #fff;
  box-shadow: 0 20px 40px #0004, 0 2px 16px #0002;
}
.plain { display: grid; place-items: center; color: #555; }
.dlg-title { display: flex; align-items: center; gap: 6px; height: 30px; padding: 0 9px 0 8px; border-radius: 8px 8px 0 0; background: #f2f2f2; color: #8a8a8a; }
.dlg-title button { margin-left: auto; }
.dlg-nav { display: flex; align-items: center; height: 55px; padding: 0 12px 2px 14px; }
.dlg-nav > .plain { width: 14px; margin-right: 14px; }
.dlg-nav > .plain:nth-child(1) { margin-right: 21px; }
.dlg-nav > .plain:nth-child(2) { margin-right: 17px; }
.address, .dlg-search { display: flex; align-items: center; height: 34px; border: 1px solid #d5d5d5; }
.address { flex: 1; gap: 7px; padding: 0 12px 0 8px; }
.address a { margin-right: auto; }
.address .plain { color: #777; }
.address .plain:last-child { margin-left: 18px; }
.dlg-search { width: 202px; margin-left: 12px; padding: 0 13px 0 8px; }
.dlg-search input { flex: 1; min-width: 0; padding: 0; border: 0; }
.dlg-search input::placeholder { color: #6d6d6d; }
.dlg-bar { display: flex; align-items: center; height: 31px; padding: 0 15px 0 18px; border-bottom: 1px solid #e5e5e5; background: #f5f6f8; }
.dlg-bar .plain { margin-left: 11px; color: #1c3a6b; }
.dlg-bar .organize { display: flex; align-items: center; gap: 5px; margin: 0 auto 0 0; }
.dlg-bar .help { width: 16px; height: 16px; margin-left: 30px; border-radius: 50%; background: #1382d8; color: #fff; font-size: 11px; font-weight: bold; }
.dlg-body { display: flex; height: 181px; }
.places { width: 227px; padding: 6px 1px 0 2px; overflow: hidden; }
.places a { position: relative; display: flex; align-items: center; gap: 5px; height: 32px; padding: 0 2px 0 32px; border-radius: 2px; }
.places .active { background: #d9d9d9; }
.places hr { height: 1px; margin: 16px 8px 15px; border: 0; background: #d0d0d0; }
.expand { position: absolute; left: 10px; color: #777; }
.places .pin { margin-left: auto; }
.scroll { width: 16px; padding: 17px 7px; background: #f0f0f0; }
.thumb { display: block; width: 2px; height: 29px; background: #858585; }
.thumb.tall { height: 43px; }
.files { flex: 1; margin-left: 2px; padding: 8px 8px 0 7px; border-left: 1px solid #eee; overflow: hidden; }
.files h3 { display: flex; align-items: center; gap: 3px; margin: 0; color: #1e3287; font-size: 14px; font-weight: normal; line-height: 20px; }
.files h3 svg { color: #777; }
.empty { margin: 38px 0 14px; color: #6d6d6d; text-align: center; }
.folders { display: grid; grid-template-columns: 228px 228px; margin: 13px 0 0 31px; }
.folder { display: flex; gap: 8px; padding-top: 8px; }
.folder span { margin-top: -6px; }
.folder small { display: block; color: #6d6d6d; font-size: 12px; }
.dlg-form { display: grid; grid-template-columns: 120px 1fr; gap: 2px 5px; align-items: center; height: 181px; padding: 11px 5px 122px 0; background: #f9f9f9; }
.dlg-form label { text-align: right; }
.field { display: flex; align-items: center; height: 23px; padding-right: 3px; border: 1px solid #c8c8c8; border-radius: 2px; background: #fdfdfd; color: #444; }
.field.strong { border-color: #868686; background: #fff; }
.field input, .field select { appearance: none; flex: 1; min-width: 0; height: 21px; padding: 0 3px; border: 0; background: none; color: #000; }
.field input { padding-left: 5px; }
.dlg-foot { display: flex; align-items: center; gap: 14px; height: 57px; padding: 0 18px 0 17px; background: #efefef; border-radius: 0 0 8px 8px; position: relative; }
.dlg-foot .hide { display: flex; align-items: center; gap: 8px; margin: 2px auto 0 -5px; color: #000; }
.btn { width: 86px; height: 24px; margin-bottom: 3px; border: 1px solid #d0d0d0; border-radius: 4px; background: #fdfdfd; }
.grip { position: absolute; right: 3px; bottom: 3px; }
```
